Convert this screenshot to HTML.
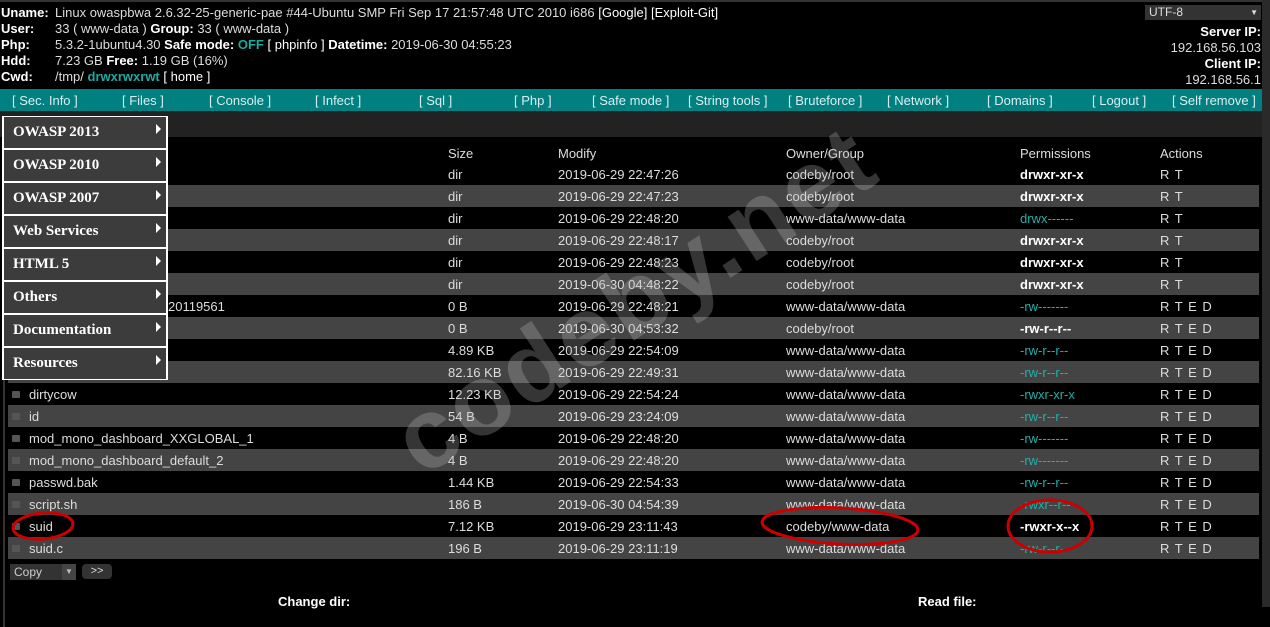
<!DOCTYPE html>
<html><head><meta charset="utf-8"><style>
*{margin:0;padding:0;box-sizing:border-box}
body{width:1270px;height:607px;background:#000;color:#ddd;font:13px "Liberation Sans",Arial,sans-serif;position:relative;overflow:hidden}
.a{position:absolute;white-space:nowrap}
b{color:#fff}
.t{color:#1ea8a0;font-weight:bold}
.hd div{position:absolute;left:1px;height:16px;line-height:16px;white-space:nowrap}
.hd span.v{position:absolute;left:54px}
.nav{position:absolute;left:0;top:89px;width:1262px;height:22px;background:#008080;color:#d8eeee;font-size:13px;line-height:23px}
.nav span{position:absolute;top:0}
.bar2{position:absolute;left:0;top:111px;width:1262px;height:26px;background:#222}
.row{position:absolute;left:8px;width:1251px;height:22px;line-height:23px;color:#ddd}
.row.g{background:#444}
.row span{position:absolute;top:0;white-space:nowrap}
.c1{left:21px}.c2{left:440px}.c3{left:550px}.c4{left:778px}.c5{left:1012px}.c6{left:1152px;letter-spacing:1px}
.pw{font-weight:bold;color:#fff}.pt{color:#22b0a8}
.cb{position:absolute;left:4px;top:8px;width:8px;height:7px;background:#555;border-radius:1px}
.menu{position:absolute;left:2px;width:166px;height:33px;background:#3c3c3c;border:2px solid #fff;border-top-width:1px;border-bottom-width:1px;color:#fff;font:bold 15px "Liberation Serif",serif;line-height:31px;padding-left:9px}
.menu:after{content:"";position:absolute;right:5px;top:7px;border-left:5px solid #fff;border-top:5px solid transparent;border-bottom:5px solid transparent}
</style></head><body>
<div style="position:absolute;left:0;top:0;width:1270px;height:2px;background:#333"></div>
<div style="position:absolute;right:0;top:0;width:8px;height:607px;background:#2a2a2a"></div>
<div class="hd">
<div style="top:5px"><b>Uname:</b><span class="v">Linux owaspbwa 2.6.32-25-generic-pae #44-Ubuntu SMP Fri Sep 17 21:57:48 UTC 2010 i686 <span style="color:#fff">[Google] [Exploit-Git]</span></span></div>
<div style="top:21px"><b>User:</b><span class="v">33 ( www-data ) <b>Group:</b> 33 ( www-data )</span></div>
<div style="top:37px"><b>Php:</b><span class="v">5.3.2-1ubuntu4.30 <b>Safe mode:</b> <span class="t">OFF</span> <span style="color:#fff">[ phpinfo ]</span> <b>Datetime:</b> 2019-06-30 04:55:23</span></div>
<div style="top:53px"><b>Hdd:</b><span class="v">7.23 GB <b>Free:</b> 1.19 GB (16%)</span></div>
<div style="top:69px"><b>Cwd:</b><span class="v">/tmp/ <span class="t">drwxrwxrwt</span> <span style="color:#fff">[ home ]</span></span></div>
</div>
<div class="a" style="left:1145px;top:5px;width:116px;height:15px;background:#333;color:#ddd;font-size:12px;line-height:15px;padding-left:4px">UTF-8<span style="position:absolute;right:3px;top:0;font-size:8px">▼</span></div>
<div class="a" style="right:9px;top:24px;text-align:right;line-height:16px"><b>Server IP:</b><br>192.168.56.103<br><b>Client IP:</b><br>192.168.56.1</div>
<div class="nav">
<span style="left:12px">[ Sec. Info ]</span><span style="left:122px">[ Files ]</span><span style="left:209px">[ Console ]</span><span style="left:315px">[ Infect ]</span><span style="left:419px">[ Sql ]</span><span style="left:514px">[ Php ]</span><span style="left:592px">[ Safe mode ]</span><span style="left:688px">[ String tools ]</span><span style="left:788px">[ Bruteforce ]</span><span style="left:887px">[ Network ]</span><span style="left:987px">[ Domains ]</span><span style="left:1092px">[ Logout ]</span><span style="left:1172px">[ Self remove ]</span>
</div>
<div class="bar2"></div>
<div style="position:absolute;left:3px;top:137px;width:2px;height:490px;background:#333"></div>
<div class="row" style="top:142px;color:#ddd"><span class="c2">Size</span><span class="c3">Modify</span><span class="c4">Owner/Group</span><span class="c5">Permissions</span><span class="c6" style="letter-spacing:0">Actions</span></div>

<div class="row" style="top:163px"><span class="c2">dir</span><span class="c3">2019-06-29 22:47:26</span><span class="c4">codeby/root</span><span class="c5 pw">drwxr-xr-x</span><span class="c6">R T</span></div>
<div class="row g" style="top:185px"><span class="c2">dir</span><span class="c3">2019-06-29 22:47:23</span><span class="c4">codeby/root</span><span class="c5 pw">drwxr-xr-x</span><span class="c6">R T</span></div>
<div class="row" style="top:207px"><span class="c2">dir</span><span class="c3">2019-06-29 22:48:20</span><span class="c4">www-data/www-data</span><span class="c5 pt">drwx------</span><span class="c6">R T</span></div>
<div class="row g" style="top:229px"><span class="c2">dir</span><span class="c3">2019-06-29 22:48:17</span><span class="c4">codeby/root</span><span class="c5 pw">drwxr-xr-x</span><span class="c6">R T</span></div>
<div class="row" style="top:251px"><span class="c2">dir</span><span class="c3">2019-06-29 22:48:23</span><span class="c4">codeby/root</span><span class="c5 pw">drwxr-xr-x</span><span class="c6">R T</span></div>
<div class="row g" style="top:273px"><span class="c2">dir</span><span class="c3">2019-06-30 04:48:22</span><span class="c4">codeby/root</span><span class="c5 pw">drwxr-xr-x</span><span class="c6">R T</span></div>
<div class="row" style="top:295px"><span style="left:160px">20119561</span><span class="c2">0 B</span><span class="c3">2019-06-29 22:48:21</span><span class="c4">www-data/www-data</span><span class="c5 pt">-rw-------</span><span class="c6">R T E D</span></div>
<div class="row g" style="top:317px"><span class="c2">0 B</span><span class="c3">2019-06-30 04:53:32</span><span class="c4">codeby/root</span><span class="c5 pw">-rw-r--r--</span><span class="c6">R T E D</span></div>
<div class="row" style="top:339px"><span class="c2">4.89 KB</span><span class="c3">2019-06-29 22:54:09</span><span class="c4">www-data/www-data</span><span class="c5 pt">-rw-r--r--</span><span class="c6">R T E D</span></div>
<div class="row g" style="top:361px"><span class="c2">82.16 KB</span><span class="c3">2019-06-29 22:49:31</span><span class="c4">www-data/www-data</span><span class="c5 pt">-rw-r--r--</span><span class="c6">R T E D</span></div>
<div class="row" style="top:383px"><i class="cb"></i><span class="c1">dirtycow</span><span class="c2">12.23 KB</span><span class="c3">2019-06-29 22:54:24</span><span class="c4">www-data/www-data</span><span class="c5 pt">-rwxr-xr-x</span><span class="c6">R T E D</span></div>
<div class="row g" style="top:405px"><i class="cb"></i><span class="c1">id</span><span class="c2">54 B</span><span class="c3">2019-06-29 23:24:09</span><span class="c4">www-data/www-data</span><span class="c5 pt">-rw-r--r--</span><span class="c6">R T E D</span></div>
<div class="row" style="top:427px"><i class="cb"></i><span class="c1">mod_mono_dashboard_XXGLOBAL_1</span><span class="c2">4 B</span><span class="c3">2019-06-29 22:48:20</span><span class="c4">www-data/www-data</span><span class="c5 pt">-rw-------</span><span class="c6">R T E D</span></div>
<div class="row g" style="top:449px"><i class="cb"></i><span class="c1">mod_mono_dashboard_default_2</span><span class="c2">4 B</span><span class="c3">2019-06-29 22:48:20</span><span class="c4">www-data/www-data</span><span class="c5 pt">-rw-------</span><span class="c6">R T E D</span></div>
<div class="row" style="top:471px"><i class="cb"></i><span class="c1">passwd.bak</span><span class="c2">1.44 KB</span><span class="c3">2019-06-29 22:54:33</span><span class="c4">www-data/www-data</span><span class="c5 pt">-rw-r--r--</span><span class="c6">R T E D</span></div>
<div class="row g" style="top:493px"><i class="cb"></i><span class="c1">script.sh</span><span class="c2">186 B</span><span class="c3">2019-06-30 04:54:39</span><span class="c4">www-data/www-data</span><span class="c5 pt">-rwxr--r--</span><span class="c6">R T E D</span></div>
<div class="row" style="top:515px"><i class="cb"></i><span class="c1">suid</span><span class="c2">7.12 KB</span><span class="c3">2019-06-29 23:11:43</span><span class="c4">codeby/www-data</span><span class="c5 pw">-rwxr-x--x</span><span class="c6">R T E D</span></div>
<div class="row g" style="top:537px"><i class="cb"></i><span class="c1">suid.c</span><span class="c2">196 B</span><span class="c3">2019-06-29 23:11:19</span><span class="c4">www-data/www-data</span><span class="c5 pt">-rw-r--r--</span><span class="c6">R T E D</span></div>

<div class="a" style="left:10px;top:564px;width:52px;height:16px;background:#333;color:#ccc;font-size:12px;line-height:16px;padding-left:4px">Copy</div>
<div class="a" style="left:62px;top:564px;width:14px;height:16px;background:#444;color:#bbb;font-size:8px;line-height:16px;text-align:center">▼</div>
<div class="a" style="left:82px;top:564px;width:30px;height:15px;background:#333;border-radius:4px;color:#ddd;font-size:11px;line-height:15px;text-align:center">&gt;&gt;</div>
<div class="a" style="left:278px;top:594px;font-weight:bold;color:#fff">Change dir:</div>
<div class="a" style="left:918px;top:594px;font-weight:bold;color:#fff">Read file:</div>

<div class="a" style="left:635px;top:300px;transform:translate(-50%,-50%) rotate(-33deg);font:bold 100px 'Liberation Sans',Arial,sans-serif;color:rgba(190,190,190,0.28);letter-spacing:3px">codeby.net</div>

<div class="menu" style="top:116px">OWASP 2013</div>
<div class="menu" style="top:149px">OWASP 2010</div>
<div class="menu" style="top:182px">OWASP 2007</div>
<div class="menu" style="top:215px">Web Services</div>
<div class="menu" style="top:248px">HTML 5</div>
<div class="menu" style="top:281px">Others</div>
<div class="menu" style="top:314px">Documentation</div>
<div class="menu" style="top:347px">Resources</div>

<svg class="a" style="left:0;top:0" width="1270" height="607">
<g fill="none" stroke="#c00" stroke-width="3">
<ellipse cx="43" cy="526" rx="30" ry="13" transform="rotate(-5 43 526)"/>
<ellipse cx="840" cy="526" rx="78" ry="18" transform="rotate(3 840 526)"/>
<ellipse cx="1050" cy="526" rx="42" ry="26"/>
</g></svg>
</body></html>
